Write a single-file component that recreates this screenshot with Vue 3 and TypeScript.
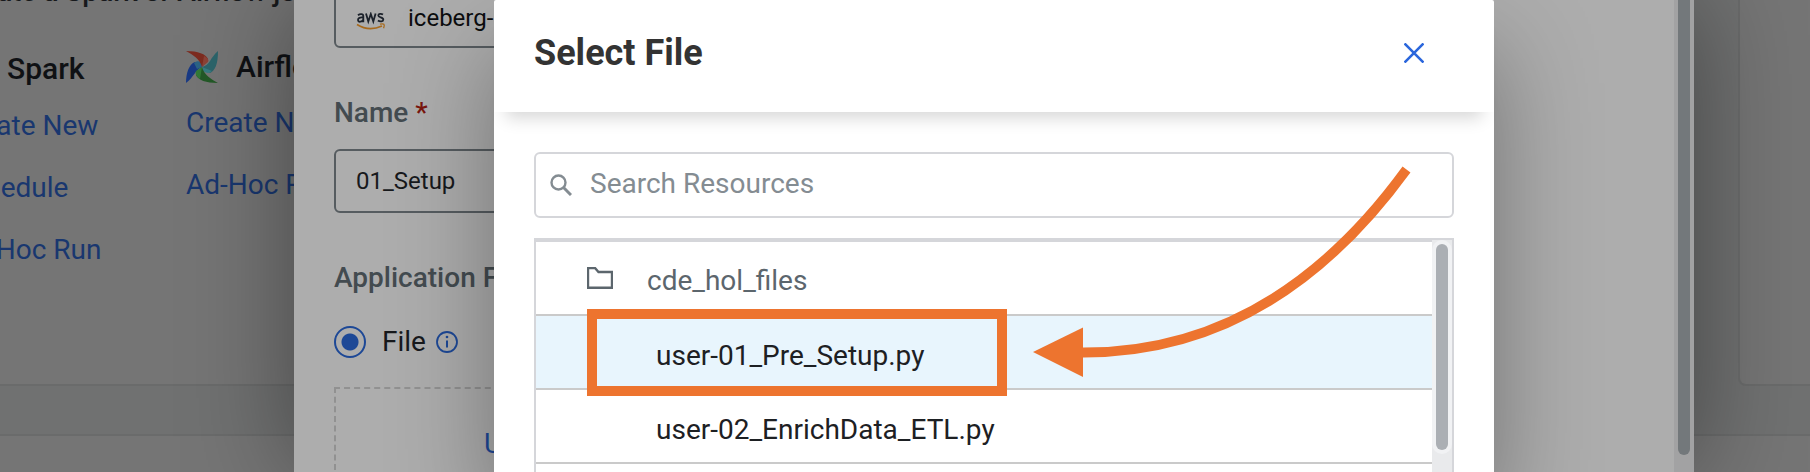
<script setup lang="ts">
import { ref } from 'vue'

interface ResourceFile {
  name: string
  selected: boolean
}

const folder = 'cde_hol_files'
const files = ref<ResourceFile[]>([
  { name: 'user-01_Pre_Setup.py', selected: true },
  { name: 'user-02_EnrichData_ETL.py', selected: false },
])
const jobName = ref('01_Setup')
const search = ref('')
const source = ref('file')
const sparkLinks = ['Create New', 'Schedule', 'Ad-Hoc Run']
const airflowLinks = ['Create New', 'Ad-Hoc Run']

function pick(file: ResourceFile) {
  files.value.forEach((f) => (f.selected = f === file))
}
</script>

<template>
  <div class="app">
    <main class="page">
      <div class="cards">
        <section class="card jobs">
          <p class="intro">Create a Spark or Airflow job</p>
          <div class="engines">
            <div class="engine">
              <h2 class="engine-title spark">
                <svg class="spark-icon" viewBox="0 0 32 36" aria-hidden="true">
                  <path d="M16 2l4 11 10 2-8 7 3 12-9-7-10 7 4-12-8-7 10-2z" fill="#7a4a20" />
                </svg>
                Spark
              </h2>
              <a v-for="l in sparkLinks" :key="l" href="#" class="engine-link">{{ l }}</a>
            </div>
            <div class="engine">
              <h2 class="engine-title">
                <svg class="airflow-icon" viewBox="0 0 32 32" aria-hidden="true">
                  <path d="M0 32C0 22 3 13 9 11l7 5C9 19 8 26 0 32z" fill="#193a85" />
                  <path d="M8 12c2-2 5-2 7-1l1 5-5 2z" fill="#2c6385" />
                  <path d="M0 0c12 0 20 3 22 8l-6 8C14 8 7 4 0 0z" fill="#7d2c20" />
                  <path d="M18 5c4 2 5 4 4 6l-6 5z" fill="#8c4237" />
                  <path d="M32 0c0 13-3 20-8 22l-8-6c8-2 8-9 16-16z" fill="#2c646b" />
                  <path d="M26 20c-3 3-6 2-9 0l-1-4z" fill="#357b82" />
                  <path d="M32 32C20 32 12 29 10 24l6-8c2 8 9 12 16 16z" fill="#235927" />
                  <path d="M14 28c-4-3-5-5-4-8l6-4z" fill="#337a36" />
                </svg>
                Airflow
              </h2>
              <a v-for="l in airflowLinks" :key="l" href="#" class="engine-link">{{ l }}</a>
            </div>
          </div>
        </section>
        <section class="card side"><span class="blob"></span></section>
      </div>
      <section class="lower"></section>
    </main>

    <div class="layer drawer-layer">
      <form class="drawer" @submit.prevent>
        <div class="form">
          <button type="button" class="box cluster">
            <svg class="aws" viewBox="0 0 30 18" aria-hidden="true">
              <g fill="none" stroke="#1c222b" stroke-width="1.8">
                <path d="M2 3.2C4 1.5 7.300 1.700 7.300 4v6.200M7.300 5.600C4 5 1.900 6 2 8c.2 2.500 4.300 2.200 5.300-.4" />
                <path d="M10 1.500l2.300 8 2.500-7.500 2.500 7.500 2.300-8" />
                <path d="M27 2.600c-2-1.300-4.700-.8-4.700.9 0 2.300 5 1.400 5 4 0 2.200-3.300 2.500-5.400 1" />
              </g>
              <path d="M1 12.500c8 5 17 5 25 1.500" fill="none" stroke="#a86a1c" stroke-width="1.700" />
              <path d="M24 12.200c4-1 5.200-.2 3.600 4" fill="none" stroke="#a86a1c" stroke-width="1.300" />
            </svg>
            iceberg-hol
          </button>
          <label class="label" for="job-name">Name <span class="req">*</span></label>
          <input id="job-name" v-model="jobName" class="box name-input" type="text" />
          <p class="label file-label">Application File</p>
          <div class="radio-row">
            <input id="src-file" v-model="source" class="radio" type="radio" value="file" name="source" />
            <label for="src-file">File</label>
            <svg class="info" viewBox="0 0 22 22" aria-hidden="true">
              <circle cx="11" cy="11" r="10" fill="none" stroke="#1d4896" stroke-width="1.800" />
              <path d="M11 9.500v7" stroke="#1d4896" stroke-width="2" />
              <circle cx="11" cy="6" r="1.300" fill="#1d4896" />
            </svg>
          </div>
          <div class="dropzone"><a href="#">Upload File</a></div>
        </div>
        <div class="drawer-track"><div class="drawer-thumb"></div></div>
      </form>
    </div>

    <div class="layer modal-layer">
      <div class="modal" role="dialog" aria-labelledby="modal-title">
        <header class="modal-head">
          <h1 id="modal-title">Select File</h1>
          <button type="button" class="close" aria-label="Close">
            <svg viewBox="0 0 20 20" aria-hidden="true">
              <path d="M0.500 0.500l19 19M19.500 0.500l-19 19" stroke="#2a66dc" stroke-width="2.600" />
            </svg>
          </button>
        </header>
        <div class="modal-body">
          <label class="search">
            <svg viewBox="0 0 22 22" aria-hidden="true">
              <circle cx="8.500" cy="8.500" r="7" fill="none" stroke="#848c92" stroke-width="2.400" />
              <path d="M13.500 13.500l7.500 7.500" stroke="#848c92" stroke-width="3" />
            </svg>
            <input v-model="search" type="text" placeholder="Search Resources" aria-label="Search Resources" />
          </label>
          <div class="browser">
            <ul class="list">
              <li class="row">
                <button type="button" class="entry folder">
                  <svg viewBox="0 0 26 22" aria-hidden="true">
                    <path d="M1 1h7l3.500 4H25v15.700H1z" fill="none" stroke="#5c666d" stroke-width="2.400" />
                  </svg>
                  {{ folder }}
                </button>
              </li>
              <li v-for="f in files" :key="f.name" class="row" :class="{ selected: f.selected }">
                <button type="button" class="entry" @click="pick(f)">{{ f.name }}</button>
                <span v-if="f.selected" class="callout"></span>
              </li>
              <li class="row"></li>
            </ul>
            <div class="track"><div class="thumb-well"><div class="thumb"></div></div></div>
          </div>
        </div>
        <svg class="arrow" viewBox="0 0 380 212" aria-hidden="true">
          <path d="M373.500 3.500Q240 187 50 186.500" fill="none" stroke="#ed742f" stroke-width="9.800" />
          <path d="M0 186L50 161.500V211z" fill="#ed742f" />
        </svg>
      </div>
    </div>
  </div>
</template>

<style>
body {
  margin: 0;
}
</style>

<style scoped>
* {
  box-sizing: border-box;
}
.app {
  position: relative;
  height: 100vh;
  overflow: hidden;
  background: #707171;
  font-family: Roboto, 'Liberation Sans', sans-serif;
  font-size: 28px;
  line-height: 32px;
  color: #17191c;
}
h1,
h2,
p,
ul {
  margin: 0;
  padding: 0;
}
button,
input {
  font: inherit;
  color: inherit;
}
a {
  text-decoration: none;
  color: #19376f;
}
.page {
  display: flex;
  flex-direction: column;
  gap: 48px;
  height: 100%;
}
.cards {
  display: flex;
  gap: 48px;
  height: 386px;
  flex: none;
}
.card {
  background: #757575;
  border: 2px solid #6a6b6b;
  border-top: 0;
  border-radius: 0 0 8px 8px;
}
.jobs {
  flex: 1;
  margin-left: -60px;
  padding-left: 12px;
  overflow: hidden;
}
.side {
  flex: none;
  width: 120px;
  margin-right: -48px;
  position: relative;
  overflow: hidden;
}
.blob {
  position: absolute;
  left: 50px;
  top: -84px;
  width: 90px;
  height: 90px;
  border-radius: 50%;
  background: #666f76;
}
.lower {
  flex: 1;
  background: #757575;
  border-top: 2px solid #6a6b6b;
}
.intro {
  margin-top: -24px;
  font-weight: 500;
}
.engines {
  display: grid;
  grid-template-columns: 232px 232px;
  padding-top: 43px;
}
.engine {
  display: flex;
  flex-direction: column;
  align-items: flex-start;
  gap: 30px;
  white-space: nowrap;
}
.engine-title {
  display: flex;
  align-items: center;
  gap: 18px;
  height: 32px;
  margin-bottom: -6px;
  font-size: 30px;
  font-weight: 500;
  color: #0f1114;
}
.spark {
  height: 35px;
}
.spark-icon {
  width: 35px;
  height: 35px;
}
.airflow-icon {
  width: 32px;
  height: 32px;
}
.layer {
  position: absolute;
  inset: 0;
  display: flex;
}
.drawer-layer {
  padding: 0 116px 0 294px;
}
.drawer {
  flex: 1;
  display: flex;
  background: #adadad;
  box-shadow: 0 0 100px rgba(0, 0, 0, 0.4);
}
.form {
  flex: 1;
  display: flex;
  flex-direction: column;
  padding: 0 40% 0 40px;
  overflow: hidden;
}
.box {
  width: 100%;
  height: 64px;
  flex: none;
  padding: 0 20px;
  border: 2px solid #565c60;
  border-radius: 6px;
  background: transparent;
  font-size: 24px;
}
.cluster {
  display: flex;
  align-items: center;
  gap: 22px;
  margin-top: -16px;
  padding-top: 4px;
  color: #0c0d0f;
}
.aws {
  width: 30px;
  height: 18px;
  margin-top: 6px;
}
.label {
  display: block;
  margin: 49px 0 20px;
  font-weight: 500;
  color: #434b50;
}
.req {
  color: #7a160e;
}
.file-label {
  margin-bottom: 32px;
}
.radio-row {
  display: flex;
  align-items: center;
  height: 32px;
}
.radio {
  appearance: none;
  width: 32px;
  height: 32px;
  margin: 0 16px 0 0;
  border: 2px solid #1d4896;
  border-radius: 50%;
  background: radial-gradient(circle, #1d4896 0 8px, transparent 9px);
}
.info {
  width: 22px;
  height: 22px;
  margin-left: 10px;
}
.dropzone {
  flex: 1;
  margin-top: 29px;
  padding: 39px 148px;
  border: 2px dashed #919191;
  border-bottom: 0;
}
.dropzone a {
  color: #1d4896;
}
.drawer-track {
  width: 20px;
  padding: 0 4px 17px;
  background: #a2a2a3;
}
.drawer-thumb {
  height: 100%;
  border-radius: 0 0 6px 6px;
  background: #73787b;
}
.modal-layer {
  padding: 0 316px 0 494px;
}
.modal {
  position: relative;
  flex: 1;
  display: flex;
  flex-direction: column;
  background: #fff;
  border-radius: 2px 2px 0 0;
  box-shadow: 0 50px 100px rgba(0, 0, 0, 0.35);
}
.modal-head {
  display: flex;
  flex: none;
  align-items: center;
  justify-content: space-between;
  height: 112px;
  padding: 0 70px 6px 40px;
  box-shadow: 0 18px 16px -12px rgba(0, 0, 0, 0.16);
}
h1 {
  font-size: 36px;
  line-height: 40px;
  font-weight: 700;
  color: #333;
}
.close {
  display: flex;
  padding: 0;
  border: 0;
  background: none;
}
.close svg {
  width: 20px;
  height: 20px;
}
.modal-body {
  flex: 1;
  display: flex;
  flex-direction: column;
  gap: 20px;
  min-height: 0;
  padding: 40px 40px 0;
}
.search {
  display: flex;
  flex: none;
  align-items: center;
  gap: 18px;
  height: 66px;
  padding: 0 14px;
  border: 2px solid #d5d6da;
  border-radius: 6px;
}
.search svg {
  width: 22px;
  height: 22px;
}
.search input {
  flex: 1;
  padding: 0 0 2px;
  border: 0;
  outline: 0;
  background: none;
}
.search input::placeholder {
  color: #848c92;
  opacity: 1;
}
.browser {
  flex: 1;
  display: flex;
  min-height: 0;
  border: 2px solid #d5d6da;
  border-bottom: 0;
  overflow: hidden;
}
.list {
  flex: 1;
  list-style: none;
  border-top: 2px solid #d5d6da;
}
.row {
  position: relative;
  height: 74px;
  border-bottom: 2px solid #cacaca;
}
.row.selected {
  background: #e8f5fd;
}
.entry {
  display: flex;
  align-items: center;
  width: 100%;
  height: 100%;
  padding: 7px 0 0 120px;
  border: 0;
  background: none;
  color: #1d2023;
}
.folder {
  gap: 34px;
  padding-top: 5px;
  padding-left: 51px;
  color: #5c666d;
}
.folder svg {
  width: 26px;
  height: 22px;
  margin-bottom: 6px;
}
.callout {
  position: absolute;
  left: 51px;
  top: -7px;
  width: 420px;
  height: 87px;
  border: 10px solid #ed742f;
  z-index: 1;
  pointer-events: none;
}
.track {
  width: 20px;
  background: #e9eaec;
}
.thumb-well {
  padding: 4px;
  border-radius: 10px;
  background: #f1f2f4;
}
.thumb {
  height: 206px;
  border-radius: 6px;
  background: #abafb4;
}
.arrow {
  position: absolute;
  right: 81px;
  top: 166px;
  width: 380px;
  height: 212px;
  z-index: 2;
  pointer-events: none;
}
</style>
